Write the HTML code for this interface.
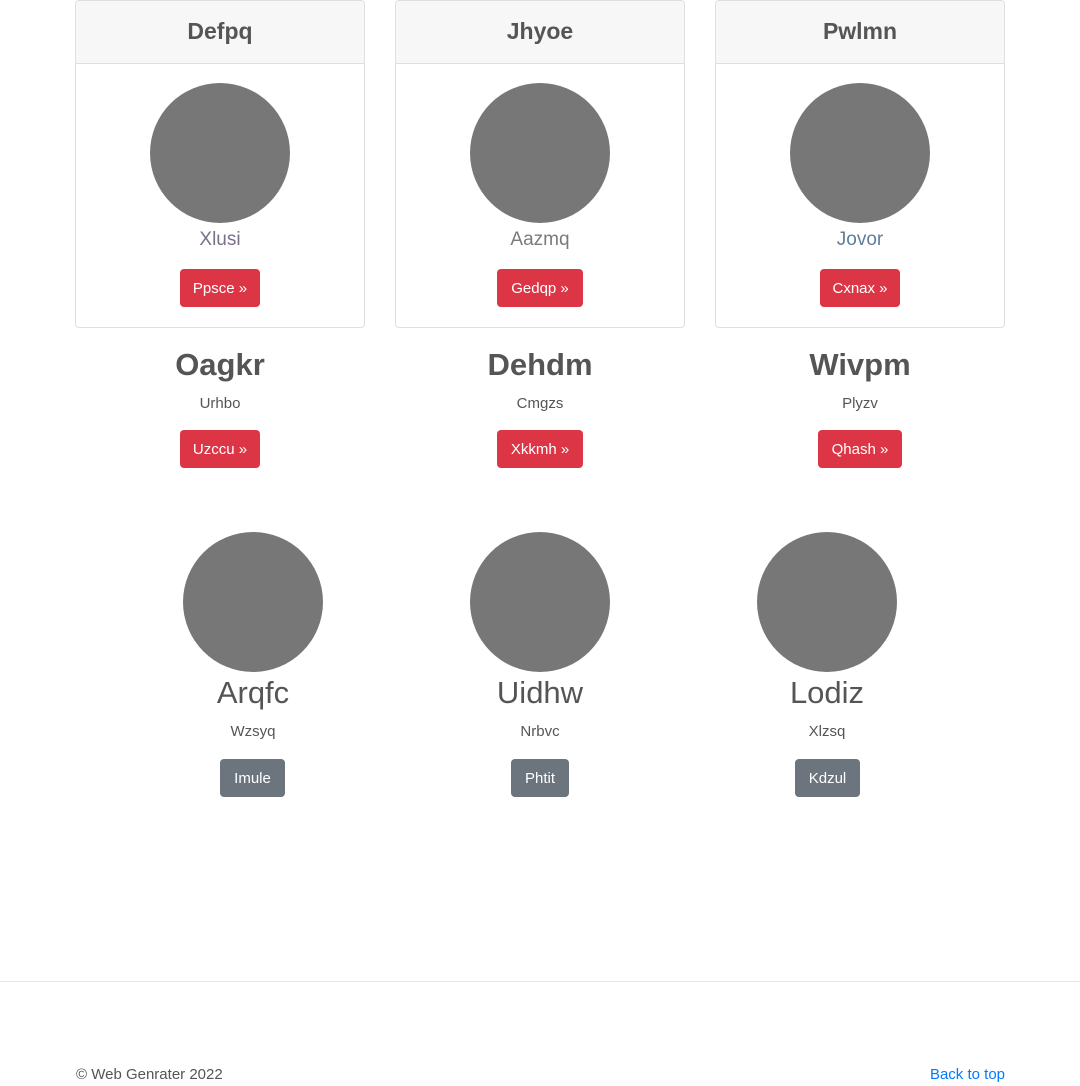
<!DOCTYPE html>
<html><head><meta charset="utf-8"><style>
*{box-sizing:border-box;margin:0;padding:0}
body{width:1080px;height:1086px;position:relative;background:#fff;font-family:"Liberation Sans",sans-serif;color:#555;overflow:hidden}
.a{position:absolute}
.card{position:absolute;top:0;width:290px;height:328px;border:1px solid #dfdfdf;border-radius:4px;overflow:hidden}
.hd{height:63px;background:#f7f7f7;border-bottom:1px solid #dfdfdf;text-align:center;font-size:23px;font-weight:bold;line-height:60px;color:#555}
.circ{position:absolute;width:140px;height:140px;border-radius:50%;background:#777}
.t{position:absolute;width:300px;text-align:center;white-space:nowrap}
.btn{position:absolute;height:38px;border-radius:4px;color:#fff;font-size:15px;line-height:40px;text-align:center}
.r{background:#dc3545}.g{background:#6c757d}
</style></head><body>

<div class="card" style="left:75px"><div class="hd">Defpq</div></div>
<div class="card" style="left:395px"><div class="hd">Jhyoe</div></div>
<div class="card" style="left:715px"><div class="hd">Pwlmn</div></div>

<div class="circ" style="left:150px;top:83px"></div>
<div class="circ" style="left:470px;top:83px"></div>
<div class="circ" style="left:790px;top:83px"></div>

<div class="t" style="left:70px;top:229px;font-size:19px;color:#7a7088">Xlusi</div>
<div class="t" style="left:390px;top:229px;font-size:19px;color:#7d7a7a">Aazmq</div>
<div class="t" style="left:710px;top:229px;font-size:19px;color:#5f7d9a">Jovor</div>

<div class="btn r" style="left:180px;top:269px;width:80px">Ppsce »</div>
<div class="btn r" style="left:497px;top:269px;width:86px">Gedqp »</div>
<div class="btn r" style="left:820px;top:269px;width:80px">Cxnax »</div>

<div class="t" style="left:70px;top:347px;font-size:31px;font-weight:bold">Oagkr</div>
<div class="t" style="left:390px;top:347px;font-size:31px;font-weight:bold">Dehdm</div>
<div class="t" style="left:710px;top:347px;font-size:31px;font-weight:bold">Wivpm</div>

<div class="t" style="left:70px;top:395px;font-size:15px">Urhbo</div>
<div class="t" style="left:390px;top:395px;font-size:15px">Cmgzs</div>
<div class="t" style="left:710px;top:395px;font-size:15px">Plyzv</div>

<div class="btn r" style="left:180px;top:430px;width:80px">Uzccu »</div>
<div class="btn r" style="left:497px;top:430px;width:86px">Xkkmh »</div>
<div class="btn r" style="left:818px;top:430px;width:84px">Qhash »</div>

<div class="circ" style="left:183px;top:532px"></div>
<div class="circ" style="left:470px;top:532px"></div>
<div class="circ" style="left:757px;top:532px"></div>

<div class="t" style="left:103px;top:675px;font-size:31px">Arqfc</div>
<div class="t" style="left:390px;top:675px;font-size:31px">Uidhw</div>
<div class="t" style="left:677px;top:675px;font-size:31px">Lodiz</div>

<div class="t" style="left:103px;top:723px;font-size:15px">Wzsyq</div>
<div class="t" style="left:390px;top:723px;font-size:15px">Nrbvc</div>
<div class="t" style="left:677px;top:723px;font-size:15px">Xlzsq</div>

<div class="btn g" style="left:220px;top:759px;width:65px">Imule</div>
<div class="btn g" style="left:511px;top:759px;width:58px">Phtit</div>
<div class="btn g" style="left:795px;top:759px;width:65px">Kdzul</div>

<div class="a" style="left:0;top:981px;width:1080px;height:1px;background:#e5e5e5"></div>
<div class="a" style="left:76px;top:1066px;font-size:15px;color:#555">© Web Genrater 2022</div>
<div class="a" style="right:75px;top:1066px;font-size:15px;color:#007bff">Back to top</div>
</body></html>
